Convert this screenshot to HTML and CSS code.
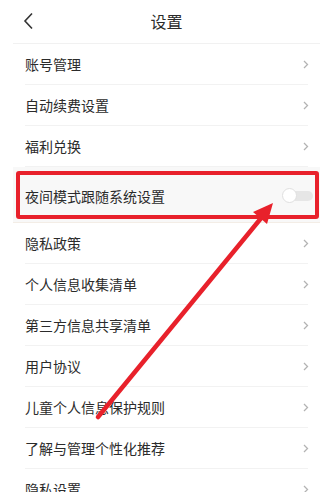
FILE: index.html
```html
<!DOCTYPE html>
<html lang="zh-CN">
<head>
<meta charset="utf-8">
<link rel="stylesheet" href="styles.css">
</head>
<body>
<div class="page">
  <header class="topbar">
    <svg class="back" width="12" height="18" viewBox="0 0 12 18"><polyline points="9,1.5 2,9 9,16.5" fill="none" stroke="#333" stroke-width="1.6" stroke-linejoin="miter"/></svg>
    <div class="title">设置</div>
  </header>
  <ul class="list">
    <li class="row"><span>账号管理</span><svg class="chev" width="6" height="9" viewBox="0 0 6 9"><polyline points="1,1 4.5,4.5 1,8" fill="none" stroke="#b3b3b3" stroke-width="1.3"/></svg></li>
    <li class="row"><span>自动续费设置</span><svg class="chev" width="6" height="9" viewBox="0 0 6 9"><polyline points="1,1 4.5,4.5 1,8" fill="none" stroke="#b3b3b3" stroke-width="1.3"/></svg></li>
    <li class="row"><span>福利兑换</span><svg class="chev" width="6" height="9" viewBox="0 0 6 9"><polyline points="1,1 4.5,4.5 1,8" fill="none" stroke="#b3b3b3" stroke-width="1.3"/></svg></li>
    <li class="row night"><span>夜间模式跟随系统设置</span><span class="toggle"><span class="knob"></span></span></li>
    <li class="row"><span>隐私政策</span><svg class="chev" width="6" height="9" viewBox="0 0 6 9"><polyline points="1,1 4.5,4.5 1,8" fill="none" stroke="#b3b3b3" stroke-width="1.3"/></svg></li>
    <li class="row"><span>个人信息收集清单</span><svg class="chev" width="6" height="9" viewBox="0 0 6 9"><polyline points="1,1 4.5,4.5 1,8" fill="none" stroke="#b3b3b3" stroke-width="1.3"/></svg></li>
    <li class="row"><span>第三方信息共享清单</span><svg class="chev" width="6" height="9" viewBox="0 0 6 9"><polyline points="1,1 4.5,4.5 1,8" fill="none" stroke="#b3b3b3" stroke-width="1.3"/></svg></li>
    <li class="row"><span>用户协议</span><svg class="chev" width="6" height="9" viewBox="0 0 6 9"><polyline points="1,1 4.5,4.5 1,8" fill="none" stroke="#b3b3b3" stroke-width="1.3"/></svg></li>
    <li class="row"><span>儿童个人信息保护规则</span><svg class="chev" width="6" height="9" viewBox="0 0 6 9"><polyline points="1,1 4.5,4.5 1,8" fill="none" stroke="#b3b3b3" stroke-width="1.3"/></svg></li>
    <li class="row"><span>了解与管理个性化推荐</span><svg class="chev" width="6" height="9" viewBox="0 0 6 9"><polyline points="1,1 4.5,4.5 1,8" fill="none" stroke="#b3b3b3" stroke-width="1.3"/></svg></li>
    <li class="row"><span>隐私设置</span><svg class="chev" width="6" height="9" viewBox="0 0 6 9"><polyline points="1,1 4.5,4.5 1,8" fill="none" stroke="#b3b3b3" stroke-width="1.3"/></svg></li>
  </ul>
  <svg class="annot" width="327" height="492" viewBox="0 0 327 492">
    <rect x="18" y="173" width="299" height="44" fill="none" stroke="#e8212b" stroke-width="4" rx="1"/>
    <line x1="98" y1="417" x2="262" y2="217" stroke="#e8212b" stroke-width="4.5" stroke-linecap="round"/>
    <polygon points="273,203 267,224 253,212" fill="#e8212b"/>
  </svg>
</div>
</body>
</html>
```
FILE: styles.css
```css
* { box-sizing: border-box; }
html, body { margin: 0; padding: 0; background: #fff; }
body {
  font-family: "Noto Sans CJK SC", "Noto Sans", sans-serif;
  color: #2b2b2b;
  width: 327px;
  height: 492px;
  overflow: hidden;
}
.page { position: relative; width: 327px; height: 492px; overflow: hidden; }
.topbar {
  position: relative;
  height: 44px;
  margin: 0 7px 0 13px;
  border-bottom: 1px solid #f1f1f1;
  display: flex;
  align-items: center;
  justify-content: center;
}
.back { position: absolute; left: 10px; top: 12px; }
.title { font-size: 16px; line-height: 20px; color: #2b2b2b; margin-top: -2px; }
.list { list-style: none; margin: 0; padding: 0; }
.row {
  height: 41px;
  margin: 0 19px 0 25px;
  border-bottom: 1px solid #f2f2f2;
  display: flex;
  align-items: center;
  justify-content: space-between;
  font-size: 14px;
  line-height: 20px;
  color: #2b2b2b;
}
.chev { margin-right: -1px; }
.row.night {
  height: 56px;
  margin: 0 7px 0 13px;
  padding: 3px 7px 0 12px;
  background: #f8f8f8;
  border-bottom: 1px solid #f3ede6;
}
.toggle {
  position: relative;
  width: 30px;
  height: 10px;
  border-radius: 5px;
  background: #e6e6e6;
  display: inline-block;
}
.knob {
  position: absolute;
  left: -1px;
  top: -3px;
  width: 15px;
  height: 15px;
  border-radius: 50%;
  background: #fff;
  border: 1px solid #e0e0e0;
}
.annot { position: absolute; left: 0; top: 0; pointer-events: none; }
```
